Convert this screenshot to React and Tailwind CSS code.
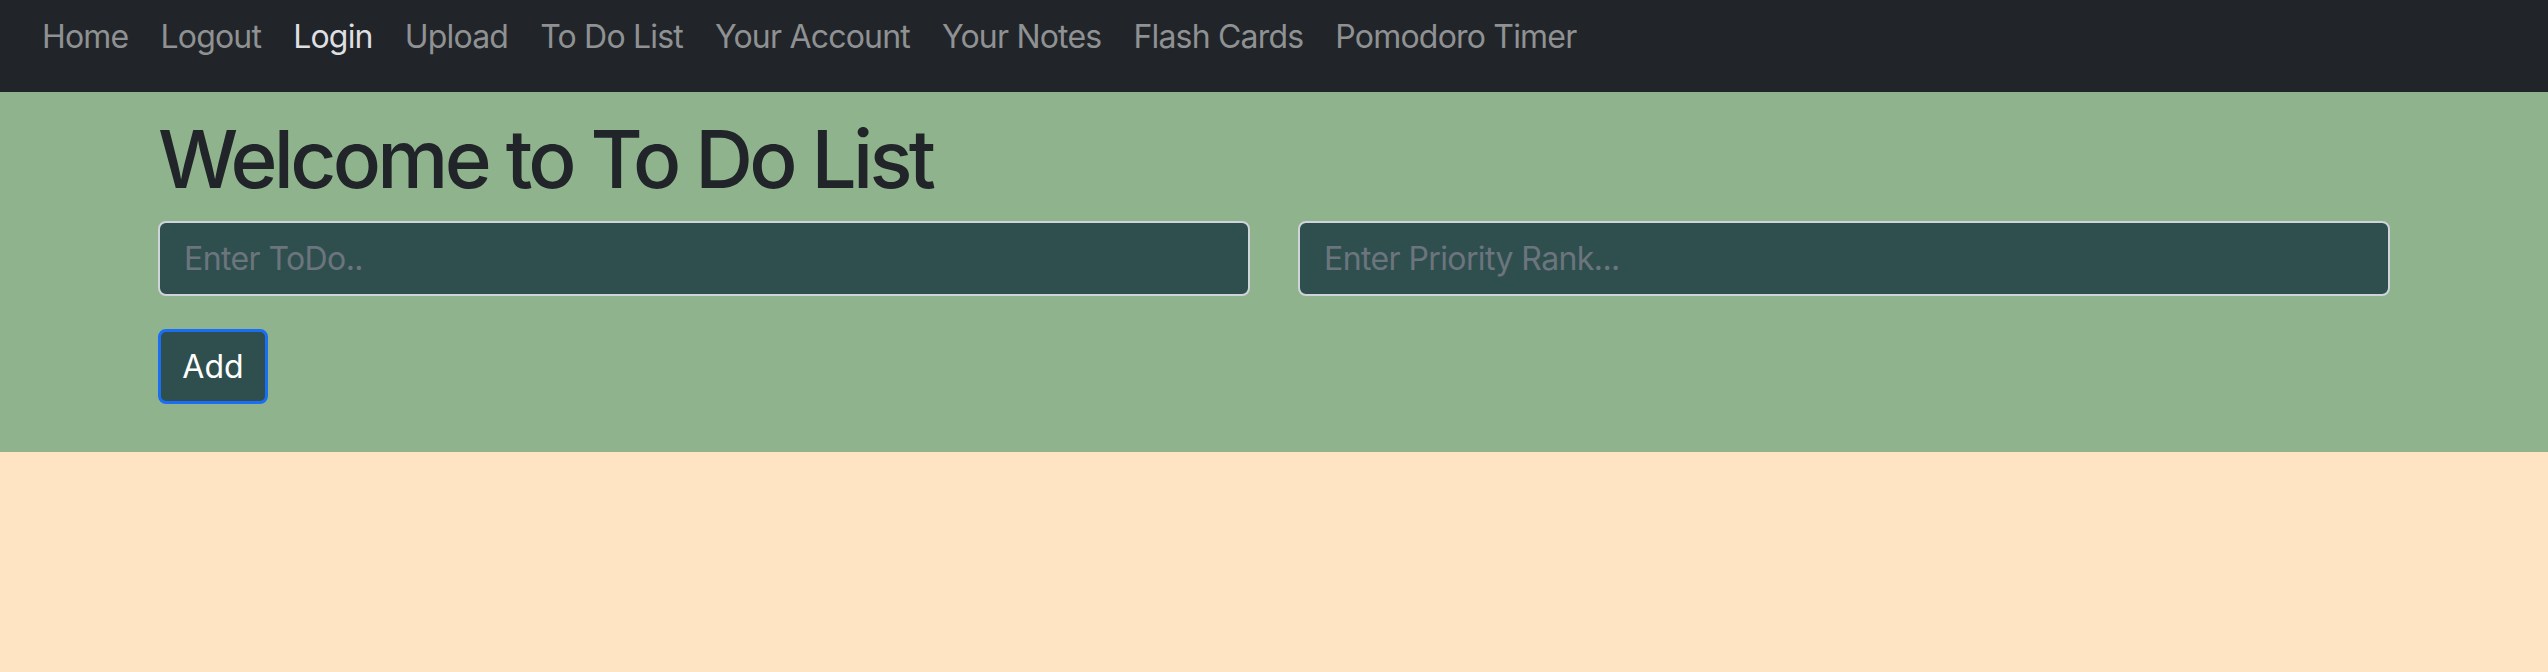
import React from "react";

const links = [
    { label: "Home" },
    { label: "Logout" },
    { label: "Login", active: true },
    { label: "Upload" },
    { label: "To Do List" },
    { label: "Your Account" },
    { label: "Your Notes" },
    { label: "Flash Cards" },
    { label: "Pomodoro Timer" },
];

function NavBar() {
    return (
        <nav className="h-[92px] bg-[#212529] flex items-start pt-[13px] px-[26px]">
            {links.map((link) => (
                <a
                    key={link.label}
                    href="#"
                    className={
                        link.active
                            ? "px-4 text-[32px] leading-[48px] tracking-[-0.8px] text-[#dedfe0]"
                            : "px-4 text-[32px] leading-[48px] tracking-[-0.8px] text-[#8f9193]"
                    }
                >
                    {link.label}
                </a>
            ))}
        </nav>
    );
}

function TodoForm() {
    return (
        <section className="bg-[#8fb48d] pt-[19px] pb-[48px]">
            <div className="w-[2232px] mx-auto">
                <h1 className="text-[80px] leading-[96px] font-medium text-[#212529] tracking-[-3.7px] mb-[14px]">
                    Welcome to To Do List
                </h1>

                <div className="grid grid-cols-2 gap-[48px]">
                    <input
                        type="text"
                        placeholder="Enter ToDo.."
                        className="h-[75px] bg-[#2f4f4f] border-2 border-[#ced4da] rounded-[8px] px-[24px] text-[32px] tracking-[-0.6px] text-white placeholder:text-[#6c757d] outline-none"
                    />
                    <input
                        type="text"
                        placeholder="Enter Priority Rank..."
                        className="h-[75px] bg-[#2f4f4f] border-2 border-[#ced4da] rounded-[8px] px-[24px] text-[32px] tracking-[-0.6px] text-white placeholder:text-[#6c757d] outline-none"
                    />
                </div>

                <button className="mt-[33px] h-[75px] w-[110px] bg-[#2f4f4f] border-[3px] border-[#1a6ef5] rounded-[8px] text-[32px] text-white">
                    Add
                </button>
            </div>
        </section>
    );
}

export default function App() {
    return (
        <div className="min-h-[672px] bg-[#ffe4c4] font-['Inter',sans-serif]">
            <NavBar />
            <TodoForm />
        </div>
    );
}
